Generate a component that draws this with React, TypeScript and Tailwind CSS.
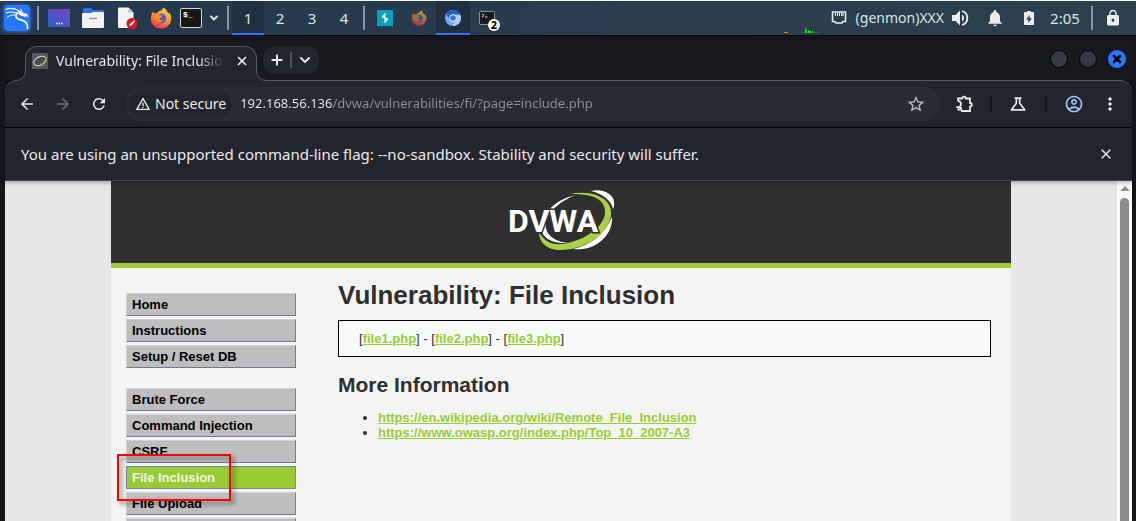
import type { ReactNode } from "react";
import { ChevronDown, Plus, X } from "lucide-react";
import {
  MdArrowBack,
  MdArrowForward,
  MdLock,
  MdMoreVert,
  MdNotifications,
  MdOutlineAccountCircle,
  MdOutlineScience,
  MdRefresh,
  MdStarBorder,
  MdWarningAmber,
} from "react-icons/md";

const menuGroups = [
  ["Home", "Instructions", "Setup / Reset DB"],
  [
    "Brute Force",
    "Command Injection",
    "CSRF",
    "File Inclusion",
    "File Upload",
    "Insecure CAPTCHA",
  ],
];

const files = ["file1.php", "file2.php", "file3.php"];

const references = [
  "https://en.wikipedia.org/wiki/Remote_File_Inclusion",
  "https://www.owasp.org/index.php/Top_10_2007-A3",
];

function KaliIcon() {
  return (
    <svg viewBox="0 0 26 26" className="size-6.5" fill="none" stroke="#fff" aria-hidden="true">
      <path d="M1.500 4.500C6 2.500 11 3 16 6.500" strokeWidth="1.300" />
      <path d="M2 8c4-1.500 8-1.500 12 .5" strokeWidth="1.100" />
      <path d="M3 12.500c3-2.500 6.500-3 10-2.500" strokeWidth="1" />
      <path d="M14.500 7.500c-3 1.500-3.500 4.500-.8 6.300 2.500 1.400 6 1.200 8.300 3.700 1.500 1.800 1.800 4 1.500 6.500" strokeWidth="1.800" />
      <path d="M14 6l3.500.5 2 1.500 3.500 1.200 1 2.300-3-.7-2.500.2-3-1.500z" fill="#fff" strokeWidth="0.500" />
      <path d="M18 6.500l-1.500-2.500M21.500 12l-1.500-1" strokeWidth="1" />
    </svg>
  );
}

function FirefoxIcon({ className }: { className: string }) {
  return (
    <svg viewBox="0 0 24 24" className={className} aria-hidden="true">
      <defs>
        <linearGradient id="fox" x1="0.8" y1="0" x2="0.3" y2="1">
          <stop offset="0" stopColor="#ffe04a" />
          <stop offset="0.45" stopColor="#ff9a2a" />
          <stop offset="1" stopColor="#f5304f" />
        </linearGradient>
      </defs>
      <path
        d="M3.400 5c.5 1 .9 1.500 1.500 2.100 1-.5 2.200-.7 3.100-.5 1-1.700 2.600-2.500 4-2.700 1-.2 1.800-1.200 2.200-3.400 3 1.400 4.300 3.300 4.600 5 .9.400 1.500 1 1.900 1.800.2-.3.200-.7.100-1.200 2 2.200 2.700 4.700 2.300 7.500C22.400 19.400 17.800 23.500 12 23.500 5.700 23.500 1 18.700 1 12.800 1 9.700 1.900 7 3.400 5z"
        fill="url(#fox)"
      />
      <circle cx="12.300" cy="12.600" r="5.200" fill="#5b52d8" />
      <path d="M12 7.500c3-.8 5.500 1.500 5.700 4.500-1.200-2-3.200-2.800-5.400-2.200z" fill="#2f7df0" />
      <path
        d="M3.600 8.500c2.800-1.500 5.400-1 7.200.6 1.100.2 2 .2 2.400.9-.5 1.300-2.200 1.300-2.900 2.500-.5 1.600 1.700 2.800 4.500 1.900-1.200 2.400-4.700 3.200-7.400 1.200-3-2-3.800-4.600-3.800-7.100z"
        fill="#ff8a22"
      />
    </svg>
  );
}

function ChromiumIcon() {
  return (
    <svg viewBox="0 0 24 24" className="size-4" aria-hidden="true">
      <circle cx="12" cy="12" r="12" fill="#78a9f8" />
      <path d="M1.600 6A12 12 0 0 1 22.400 6L22.700 7H12a5.500 5.500 0 0 0-5 7.500z" fill="#1e5fd0" />
      <path d="M22.700 7A12 12 0 0 1 11.500 24L17 14.500A5.500 5.500 0 0 0 15.500 7z" fill="#b4cffb" />
      <circle cx="12" cy="12" r="5.600" fill="#f1f6ff" />
      <circle cx="12" cy="12" r="4.200" fill="#2b72e4" />
    </svg>
  );
}

function DvwaLogo() {
  return (
    <svg viewBox="0 0 108 64" className="h-16 w-27" role="img" aria-label="DVWA">
      <path d="M84 2C93-1 107 4 107 13 107.500 16 107 18 106 20 104 11 96 5 84 2z" fill="#fff" />
      <path d="M105 28C106 36 101 47 94 52 86 59 76 61 66 60 84 56 98 45 105 28z" fill="#fff" />
      <path
        d="M63 5C78 2 93 5 100 13 107 21 105 33 95 44 84 55 68 61 53 61 42 61 32 55 32 43 37 52 44 56 55 55 70 53 84 46 92 37 98 30 100 22 96 15 91 7 79 5 63 5z"
        fill="#a9d046"
      />
      <path
        d="M69 6C55 11 42 21 39 33 37 43 44 52 61 54 46 55 34 49 34 38 34 25 49 10 69 6z"
        fill="#fff"
      />
      <text
        x="1"
        y="43"
        fontSize="32"
        stroke="#2f2f2f"
        strokeWidth="3"
        paintOrder="stroke"
        fill="#fff"
        className="font-['Roboto',sans-serif] font-bold"
      >
        DVWA
      </text>
    </svg>
  );
}

function Slot({ label, className, children }: { label: string; className: string; children: ReactNode }) {
  return (
    <button aria-label={label} className={`flex h-full shrink-0 items-center justify-center ${className}`}>
      {children}
    </button>
  );
}

function Divider({ className }: { className: string }) {
  return (
    <div className={`flex shrink-0 justify-center ${className}`}>
      <span className="h-6 w-0.5 bg-[#8995a1]" />
    </div>
  );
}

function Taskbar() {
  return (
    <header className="flex h-9 shrink-0 items-center border-t border-b border-t-[#f3f6f6] border-b-black bg-linear-to-r from-[#26384e] to-[#2b404c] text-[15px] text-[#dfe3e6]">
      <Slot label="Applications" className="w-8.5">
        <span className="flex size-6.5 items-center justify-center rounded-sm bg-[#2678fb] shadow-[0_0_4px_#2678fb]">
          <KaliIcon />
        </span>
      </Slot>
      <Divider className="w-2" />
      <Slot label="Show desktop" className="w-8.5">
        <svg viewBox="0 0 22 18" className="h-4.5 w-5.5">
          <defs>
            <linearGradient id="desk" x1="0" y1="1" x2="1" y2="0">
              <stop offset="0" stopColor="#285fd6" />
              <stop offset="1" stopColor="#7a45b4" />
            </linearGradient>
          </defs>
          <rect width="22" height="18" rx="1" fill="url(#desk)" />
          <path d="M8 14.500h1.500m1 0h1.500m1 0h1.500" stroke="#fff" strokeWidth="1.500" />
        </svg>
      </Slot>
      <Slot label="Files" className="w-8.5">
        <svg viewBox="0 0 22 20" className="h-5 w-5.5">
          <path d="M1 2a2 2 0 0 1 2-2h6l2 2h9a2 2 0 0 1 2 2v6H1z" fill="#2c74e8" />
          <path d="M0 6a1 1 0 0 1 1-1h8l2-1h10a1 1 0 0 1 1 1v14a1 1 0 0 1-1 1H1a1 1 0 0 1-1-1z" fill="#f2f2f2" />
          <path d="M7 10.500h8" stroke="#9a9a9a" strokeWidth="1.500" />
        </svg>
      </Slot>
      <Slot label="Text editor" className="w-8.5">
        <svg viewBox="0 0 22 22" className="size-5.5">
          <path d="M2 1.500A1 1 0 0 1 3 .5h9.500l5 5V20a1 1 0 0 1-1 1H3a1 1 0 0 1-1-1z" fill="#f2f2f2" />
          <path d="M12.500.5v5h5z" fill="#c4c4c4" />
          <circle cx="16" cy="16.500" r="5.500" fill="#d3181f" />
          <path d="M13.500 19l.5-1.800 4-4 1.200 1.200-4 4z" fill="#fff" />
        </svg>
      </Slot>
      <Slot label="Firefox" className="w-8.5">
        <FirefoxIcon className="size-5.5" />
      </Slot>
      <Slot label="Terminal" className="w-6.5">
        <span className="flex h-5 w-5.5 items-start rounded-xs border border-[#d6d6d6] bg-[#171717] px-0.5 font-['Liberation_Mono',monospace] text-[8px] leading-3 font-bold text-white">
          $_
        </span>
      </Slot>
      <Slot label="More launchers" className="w-5">
        <ChevronDown className="size-3" strokeWidth={4} />
      </Slot>
      <Divider className="w-2" />
      <button className="h-full w-8 border-b-2 border-[#2777ff] bg-[#203040] pt-0.5">1</button>
      <button className="w-8">2</button>
      <button className="w-8">3</button>
      <button className="w-8">4</button>
      <Divider className="w-2" />
      <Slot label="Burp Suite" className="w-8.5">
        <svg viewBox="0 0 16 16" className="size-4">
          <rect width="16" height="16" fill="#07a3bd" />
          <path d="M8.500 2.500V7H4.500zM7.500 13.500V9h4z" fill="#fff" />
          <path d="M5 6.500l6 3" stroke="#fff" strokeWidth="1.500" />
        </svg>
      </Slot>
      <Slot label="Firefox window" className="w-8.5">
        <FirefoxIcon className="size-4 opacity-60" />
      </Slot>
      <Slot label="Chromium window" className="w-8.5 border-b-2 border-[#2777ff] bg-[#203040] pt-0.5">
        <ChromiumIcon />
      </Slot>
      <Slot label="Terminal windows" className="relative w-8.5">
        <svg viewBox="0 0 16 14" className="h-3.5 w-4">
          <rect x="0.500" y="0.500" width="15" height="13" rx="1" fill="#1a1a1a" stroke="#909090" />
          <path d="M3 3l2 1.500L3 6m3 0h2.500" stroke="#ddd" fill="none" />
        </svg>
        <span className="absolute right-1 bottom-1 flex size-3 items-center justify-center rounded-full bg-white text-[11px] leading-3 font-bold text-black">
          2
        </span>
      </Slot>
      <div className="flex h-full flex-1 justify-end">
        <svg viewBox="0 0 44 34" className="h-full w-11" aria-hidden="true">
          <path d="M6 31.500h4" stroke="#cf920e" />
          <path d="M24 31.500h16" stroke="#0b7d20" />
          <path d="M27.500 32v-5M28.500 32v-3M30.500 32v-3M31.500 32v-2M32.500 32v-2M34.500 32v-2" stroke="#0bea1d" />
        </svg>
      </div>
      <Slot label="Network" className="w-8.5">
        <svg viewBox="0 0 16 14" className="h-3.5 w-4" fill="none" stroke="#eceeee">
          <path d="M1.500 1h13v9.500H12L11 12H5l-1-1.500H1.500z" strokeWidth="1.600" />
          <path d="M4.500 2v3M6.500 2v3M8.500 2v3M10.500 2v3M12 2v3" />
        </svg>
      </Slot>
      <span className="text-sm">(genmon)XXX</span>
      <Slot label="Volume" className="w-8.5">
        <svg viewBox="0 0 18 16" className="h-4 w-4.5" fill="#eceeee">
          <path d="M0 5h3.500L8 .5v15L3.500 11H0z" />
          <path d="M10 4.500a4 4 0 0 1 0 7z" />
          <path d="M10 1.200a7 7 0 0 1 0 13.600" fill="none" stroke="#eceeee" strokeWidth="1.800" />
        </svg>
      </Slot>
      <Slot label="Notifications" className="w-8.5">
        <MdNotifications className="size-5 text-[#eceeee]" />
      </Slot>
      <Slot label="Battery" className="w-8.5">
        <svg viewBox="0 0 10 14" className="h-3.5 w-2.5">
          <path d="M3 0h4v1h2a1 1 0 0 1 1 1v11a1 1 0 0 1-1 1H1a1 1 0 0 1-1-1V2a1 1 0 0 1 1-1h2z" fill="#eceeee" />
          <path d="M6 4L2 8.500h2.500L4 12l4-4.500H5.500z" fill="#293d4b" />
        </svg>
      </Slot>
      <span className="w-9.5 text-center">2:05</span>
      <Divider className="w-4" />
      <Slot label="Lock screen" className="mr-2.5 w-6.5">
        <MdLock className="size-4.5 text-[#eceeee]" />
      </Slot>
    </header>
  );
}

function TabStrip() {
  return (
    <div className="flex h-10 shrink-0 items-start bg-[#18191f] pt-1.5 text-[#e3e4e7]">
      <div className="relative z-10 ml-5 flex h-8.75 w-58 items-start rounded-t-xl border border-b-0 border-[#575a64] bg-[#23252e] px-1.5 pt-0.5">
        <svg viewBox="0 0 12 10" className="absolute bottom-0 -left-2.5 h-2.5 w-3" aria-hidden="true">
          <path d="M0 9.500A9.500 9.500 0 0 0 9.500 0H12V10H0z" fill="#23252e" />
          <path d="M0 9.500A9.500 9.500 0 0 0 9.500 0" fill="none" stroke="#575a64" />
        </svg>
        <svg viewBox="0 0 12 10" className="absolute -right-2.5 bottom-0 h-2.5 w-3" aria-hidden="true">
          <path d="M12 9.500A9.500 9.500 0 0 1 2.500 0H0V10H12z" fill="#23252e" />
          <path d="M12 9.500A9.500 9.500 0 0 1 2.500 0" fill="none" stroke="#575a64" />
        </svg>
        <svg viewBox="0 0 16 16" className="mt-1 size-4 shrink-0" aria-hidden="true">
          <rect width="16" height="16" fill="#55585c" />
          <ellipse cx="8" cy="8" rx="6.500" ry="4.200" transform="rotate(-25 8 8)" fill="#4a4d50" stroke="#d5dad2" />
          <path d="M13.500 4c1.500 2.500-1 6.500-5 8" fill="none" stroke="#8db04a" strokeWidth="1.500" />
        </svg>
        <span className="ml-2 h-6 flex-1 overflow-hidden text-sm leading-6 whitespace-nowrap [mask-image:linear-gradient(90deg,#000_85%,transparent)]">
          Vulnerability: File Inclusion
        </span>
        <button aria-label="Close tab" className="ml-2.5 flex h-6 w-4 items-center justify-center">
          <X className="size-3.5" strokeWidth={3} />
        </button>
      </div>
      <div className="ml-1.5 flex h-7 w-14 items-center justify-between rounded-xl bg-[#23252e] px-1.5">
        <button aria-label="New tab">
          <Plus className="size-4" strokeWidth={3} />
        </button>
        <span className="h-4 w-0.5 bg-[#50535b]" />
        <button aria-label="Search tabs">
          <ChevronDown className="size-4" strokeWidth={3} />
        </button>
      </div>
      <div className="mt-1 mr-1.5 ml-auto flex gap-2.75">
        <button aria-label="Minimize" className="size-4.5 rounded-full border border-black bg-[#363a47]" />
        <button aria-label="Maximize" className="size-4.5 rounded-full border border-black bg-[#363a47]" />
        <button
          aria-label="Close window"
          className="flex size-4.5 items-center justify-center rounded-full bg-[#2777ff] text-black"
        >
          <X className="size-3" strokeWidth={5} />
        </button>
      </div>
    </div>
  );
}

function Toolbar() {
  return (
    <div className="flex h-12 shrink-0 items-center rounded-t-xl border-t border-b border-t-[#575a64] border-b-black bg-[#23252e] px-1 text-[#e9eaec]">
      <Slot label="Back" className="w-9">
        <MdArrowBack className="size-4.5" />
      </Slot>
      <Slot label="Forward" className="w-9 text-[#6c6e75]">
        <MdArrowForward className="size-4.5" />
      </Slot>
      <Slot label="Reload" className="w-9">
        <MdRefresh className="size-4.5" />
      </Slot>
      <div className="mr-1.5 ml-2 flex h-8.5 min-w-0 flex-1 items-center rounded-full bg-[#282a35] pr-3.5 pl-1">
        <button className="flex h-6 shrink-0 items-center gap-1 rounded-full bg-[#23252e] px-1.5 text-sm">
          <MdWarningAmber className="size-4" />
          Not secure
        </button>
        <input
          aria-label="Address"
          defaultValue="192.168.56.136/dvwa/vulnerabilities/fi/?page=include.php"
          className="ml-2 min-w-0 flex-1 bg-[linear-gradient(90deg,#e9eaec_93px,#8e9097_93px)] bg-clip-text text-[13px] text-transparent outline-none"
        />
        <button aria-label="Bookmark this page" className="text-[#b9bbc0]">
          <MdStarBorder className="size-5" />
        </button>
      </div>
      <Slot label="Extensions" className="w-9">
        <svg viewBox="0 0 18 18" className="size-4.5" fill="none" stroke="#e9eaec" strokeWidth="1.800">
          <path d="M3 6V3.500h4.200a1.800 1.800 0 0 1 3.600 0H15V8a1.800 1.800 0 0 1 0 3.600V16H6" />
          <path d="M3 6c3 0 4 3.500 2 5.500-1 1-2.500 1-3.500 0m1 3h3.500V12" />
        </svg>
      </Slot>
      <span className="mx-2 h-4 w-0.5 bg-[#14151a]" />
      <Slot label="Chrome Labs" className="w-9">
        <MdOutlineScience className="size-5" />
      </Slot>
      <span className="mx-2.25 h-4 w-0.5 bg-[#14151a]" />
      <Slot label="Profile" className="w-9 text-[#a3c4fb]">
        <MdOutlineAccountCircle className="size-5" />
      </Slot>
      <Slot label="Menu" className="w-9">
        <MdMoreVert className="size-5" />
      </Slot>
    </div>
  );
}

function Infobar() {
  return (
    <div className="relative z-10 flex h-13.25 shrink-0 items-center justify-between border-b border-[#474742] bg-[#23252e] pr-4.5 pl-4 text-[15px] text-[#e9eaec] shadow-[0_1px_5px_rgba(0,0,0,0.4)]">
      <p>You are using an unsupported command-line flag: --no-sandbox. Stability and security will suffer.</p>
      <button aria-label="Dismiss">
        <X className="size-4" />
      </button>
    </div>
  );
}

function SideMenu() {
  return (
    <nav className="flex w-42.5 shrink-0 flex-col gap-5 pt-6.25">
      {menuGroups.map((group, index) => (
        <ul key={index} className="flex flex-col gap-0.75">
          {group.map((item) => (
            <li key={item} className="relative">
              <a
                href="#"
                className={
                  item === "File Inclusion"
                    ? "block border border-[#7087a4] bg-[#99cc33] px-1.25 leading-5.25 font-bold text-[#f4f4e8]"
                    : "block border border-t-[#d2d2d2] border-r-[#6f7b90] border-b-[#6f7b90] border-l-[#d2d2d2] bg-[#bebebe] px-1.25 leading-5.25 font-bold text-black"
                }
              >
                {item}
              </a>
              {item === "File Inclusion" && (
                <span className="pointer-events-none absolute -top-3 -left-2.25 z-10 h-11.75 w-28.5 border-2 border-[#ff0000] drop-shadow-[3px_3px_2px_rgba(0,0,0,0.5)]" />
              )}
            </li>
          ))}
        </ul>
      ))}
    </nav>
  );
}

function VulnerabilityPage() {
  return (
    <div className="flex min-h-0 flex-1 bg-[#e7e7e7]">
      <div className="min-w-0 flex-1 overflow-hidden">
        <div className="mx-auto max-w-225 bg-[#f4f4f4] font-['Liberation_Sans',sans-serif] text-[13px] leading-[15px] text-[#2f2f2f]">
          <div className="flex justify-center border-b-5 border-[#a1cc33] bg-[#2f2f2f] pt-2 pb-2.5">
            <DvwaLogo />
          </div>
          <div className="flex gap-10.5 pr-5 pl-3.75">
            <SideMenu />
            <main className="min-w-0 flex-1 pt-2.75">
              <h1 className="text-[26px] leading-8 font-bold">Vulnerability: File Inclusion</h1>
              <div className="mt-2.25 border border-black bg-[#f8fafa] px-5 py-2.5">
                {files.map((file, index) => (
                  <span key={file}>
                    {index > 0 && " - "}[
                    <a href="#" className="font-bold text-[#99cc33] underline">
                      {file}
                    </a>
                    ]
                  </span>
                ))}
              </div>
              <h2 className="mt-4 text-[21px] leading-6 font-bold">More Information</h2>
              <ul className="mt-3.25 list-disc pl-10">
                {references.map((url) => (
                  <li key={url}>
                    <a href="#" className="font-bold text-[#99cc33] underline">
                      {url}
                    </a>
                  </li>
                ))}
              </ul>
            </main>
          </div>
        </div>
      </div>
      <div className="flex w-3.75 shrink-0 flex-col items-center bg-[#fcfcfc] pt-1.25" aria-hidden="true">
        <svg viewBox="0 0 10 5" className="h-1.25 w-2.5">
          <path d="M5 0l5 5H0z" fill="#8b8b8b" />
        </svg>
        <div className="mt-1.75 w-2.25 flex-1 rounded-t-full bg-[#8b8b8b]" />
      </div>
    </div>
  );
}

export default function App() {
  return (
    <div className="flex h-screen flex-col overflow-hidden bg-[#101116] font-['Noto_Sans',sans-serif]">
      <Taskbar />
      <div className="flex min-h-0 flex-1 flex-col border-t-4 border-r-4 border-l-5 border-[#14151b]">
        <TabStrip />
        <Toolbar />
        <Infobar />
        <VulnerabilityPage />
      </div>
    </div>
  );
}
